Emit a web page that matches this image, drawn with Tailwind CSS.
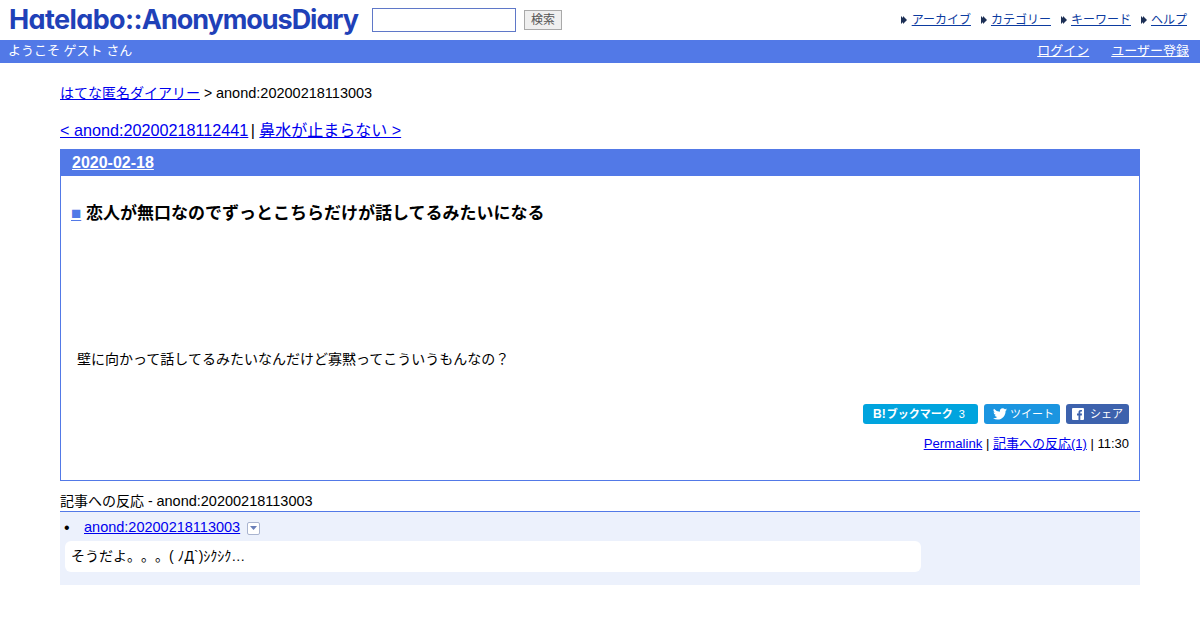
<!DOCTYPE html>
<html lang="ja">
<head>
<meta charset="utf-8">
<script src="https://cdn.jsdelivr.net/npm/@tailwindcss/browser@4"></script>
<title>anond:20200218113003</title>
</head>
<body class="bg-white text-black font-['Liberation_Sans','Noto_Sans_CJK_JP',sans-serif] text-[14px] [text-spacing-trim:space-all] h-[630px] overflow-hidden">
<header class="h-10 flex items-center">
  <div class="w-[372px] pl-[9px] shrink-0 font-['Inter','Liberation_Sans',sans-serif] [font-feature-settings:'cv11'] font-bold text-[27px] leading-10 text-[#1f41b8] whitespace-nowrap"><span class="tracking-[-0.6px]">Hatelabo::</span><span class="tracking-[-1.05px]">AnonymousDiary</span></div>
  <input type="text" class="w-[144px] h-6 border border-[#5f78c8] bg-white" aria-label="search">
  <button class="ml-2 w-[38px] h-5 border border-[#a9a9a9] bg-[#efefef] text-[12px] leading-[18px] text-[#555]">検索</button>
  <nav class="ml-auto pr-[13px] flex gap-[10px] text-[12px] text-[#0c3ba0]">
    <span class="flex items-center gap-[5px]"><svg width="6" height="10" viewBox="0 0 6 10"><path d="M0 1l4 4-4 4zM2 1l4 4-4 4z" fill="#1c2f55"/></svg><a class="underline" href="#">アーカイブ</a></span>
    <span class="flex items-center gap-[4px]"><svg width="6" height="10" viewBox="0 0 6 10"><path d="M0 1l4 4-4 4zM2 1l4 4-4 4z" fill="#1c2f55"/></svg><a class="underline" href="#">カテゴリー</a></span>
    <span class="flex items-center gap-[4px]"><svg width="6" height="10" viewBox="0 0 6 10"><path d="M0 1l4 4-4 4zM2 1l4 4-4 4z" fill="#1c2f55"/></svg><a class="underline" href="#">キーワード</a></span>
    <span class="flex items-center gap-[4px]"><svg width="6" height="10" viewBox="0 0 6 10"><path d="M0 1l4 4-4 4zM2 1l4 4-4 4z" fill="#1c2f55"/></svg><a class="underline" href="#">ヘルプ</a></span>
  </nav>
</header>
<div class="h-[23px] bg-[#5279e7] text-white text-[13px] leading-[21px] flex justify-between pl-2 pr-[11px]">
  <span>ようこそ ゲスト さん</span>
  <span class="flex gap-[22px]"><a class="underline" href="#">ログイン</a><a class="underline" href="#">ユーザー登録</a></span>
</div>
<main class="mx-[60px]">
  <p class="mt-[21px] leading-[18px]"><a class="underline text-[#0000ee]" href="#">はてな匿名ダイアリー</a> &gt; <span class="text-[14.5px]">anond:20200218113003</span></p>
  <p class="mt-[18px] text-[16px] leading-5"><a class="underline text-[#0000ee]" href="#"><span class="text-[16.2px]">&lt; anond:20200218112441</span></a><span class="ml-[-2px]"> | </span><a class="underline text-[#0000ee]" href="#">鼻水が止まらない &gt;</a></p>
  <section class="mt-[8px] h-[332px] border border-[#5279e7] flex flex-col">
    <h2 class="h-[27px] -mx-px -mt-px bg-[#5279e7] pl-3 text-white font-bold text-[16px] leading-[27px]"><a class="underline" href="#">2020-02-18</a></h2>
    <h3 class="mt-[27px] pl-[10px] text-[17px] font-bold leading-[22px]"><a class="underline text-[#5279e7] font-normal" href="#">■</a> 恋人が無口なのでずっとこちらだけが話してるみたいになる</h3>
    <p class="mt-[124px] pl-4 leading-5">壁に向かって話してるみたいなんだけど寡黙ってこういうもんなの？</p>
    <div class="mt-[35px] pr-[10px] flex justify-end gap-[6px] text-[11px] text-white">
      <span class="w-[115px] h-5 rounded-[3px] bg-[#00a4de] flex items-center pl-[10px] font-bold whitespace-nowrap"><span class="text-[12px]">B!</span><span class="text-[11px] ml-[1px]">ブックマーク</span><span class="font-normal ml-[6px]">3</span></span>
      <span class="w-[76px] h-5 rounded-[3px] bg-[#1b95e0] flex items-center pl-[9px] gap-[3px]"><svg width="14" height="12" viewBox="0 0 24 20"><path fill="#fff" d="M24 2.400a9.800 9.800 0 0 1-2.800.8 5 5 0 0 0 2.200-2.700 9.800 9.800 0 0 1-3.100 1.200A4.900 4.900 0 0 0 11.900 6.100 14 14 0 0 1 1.700.9a4.900 4.900 0 0 0 1.500 6.600 4.900 4.900 0 0 1-2.200-.6v.1a4.900 4.900 0 0 0 3.900 4.800 4.900 4.900 0 0 1-2.200.1 4.900 4.900 0 0 0 4.600 3.400A9.900 9.900 0 0 1 0 17.300 14 14 0 0 0 7.500 19.500c9.100 0 14-7.500 14-14v-.6A10 10 0 0 0 24 2.400z"/></svg>ツイート</span>
      <span class="w-[63px] h-5 rounded-[3px] bg-[#3d62ad] flex items-center pl-[6px] gap-[6px]"><svg width="12" height="12" viewBox="0 0 12 12"><rect width="12" height="12" rx="1" fill="#fff"/><path fill="#3d62ad" d="M8.300 12V7.400h1.500l.2-1.800H8.300V4.500c0-.5.200-.9.900-.9H10V2c-.2 0-.7-.1-1.300-.1-1.300 0-2.200.8-2.200 2.300v1.400H5v1.800h1.500V12z"/></svg>シェア</span>
    </div>
    <p class="mt-[10px] pr-[10px] text-right text-[13px] leading-[20px]"><a class="underline text-[#0000ee]" href="#"><span class="text-[13.2px]">Permalink</span></a> | <a class="underline text-[#0000ee]" href="#">記事への反応(1)</a> | 11:30</p>
  </section>
  <h4 class="mt-[10px] h-[21px] leading-5 border-b border-[#5279e7]">記事への反応 - <span class="text-[14.5px]">anond:20200218113003</span></h4>
  <div class="h-[73px] bg-[#ecf1fc] pt-[6px]">
    <div class="flex items-center h-5 pl-[4px]">
      <span class="w-5 text-[16px] leading-5">•</span>
      <a class="underline text-[#0000ee] text-[14.5px]" href="#">anond:20200218113003</a>
      <span class="ml-[7px] w-[13px] h-[13px] border border-[#a9b4d0] rounded-[2px] bg-white flex items-center justify-center"><svg width="7" height="4" viewBox="0 0 7 4"><path d="M0 0h7L3.500 4z" fill="#6a7fb8"/></svg></span>
    </div>
    <div class="mt-[3px] ml-[5px] w-[856px] h-[31px] rounded-[6px] bg-white pl-[6px] leading-[31px]">そうだよ。。。( ﾉД`)ｼｸｼｸ…</div>
  </div>
</main>
</body>
</html>
